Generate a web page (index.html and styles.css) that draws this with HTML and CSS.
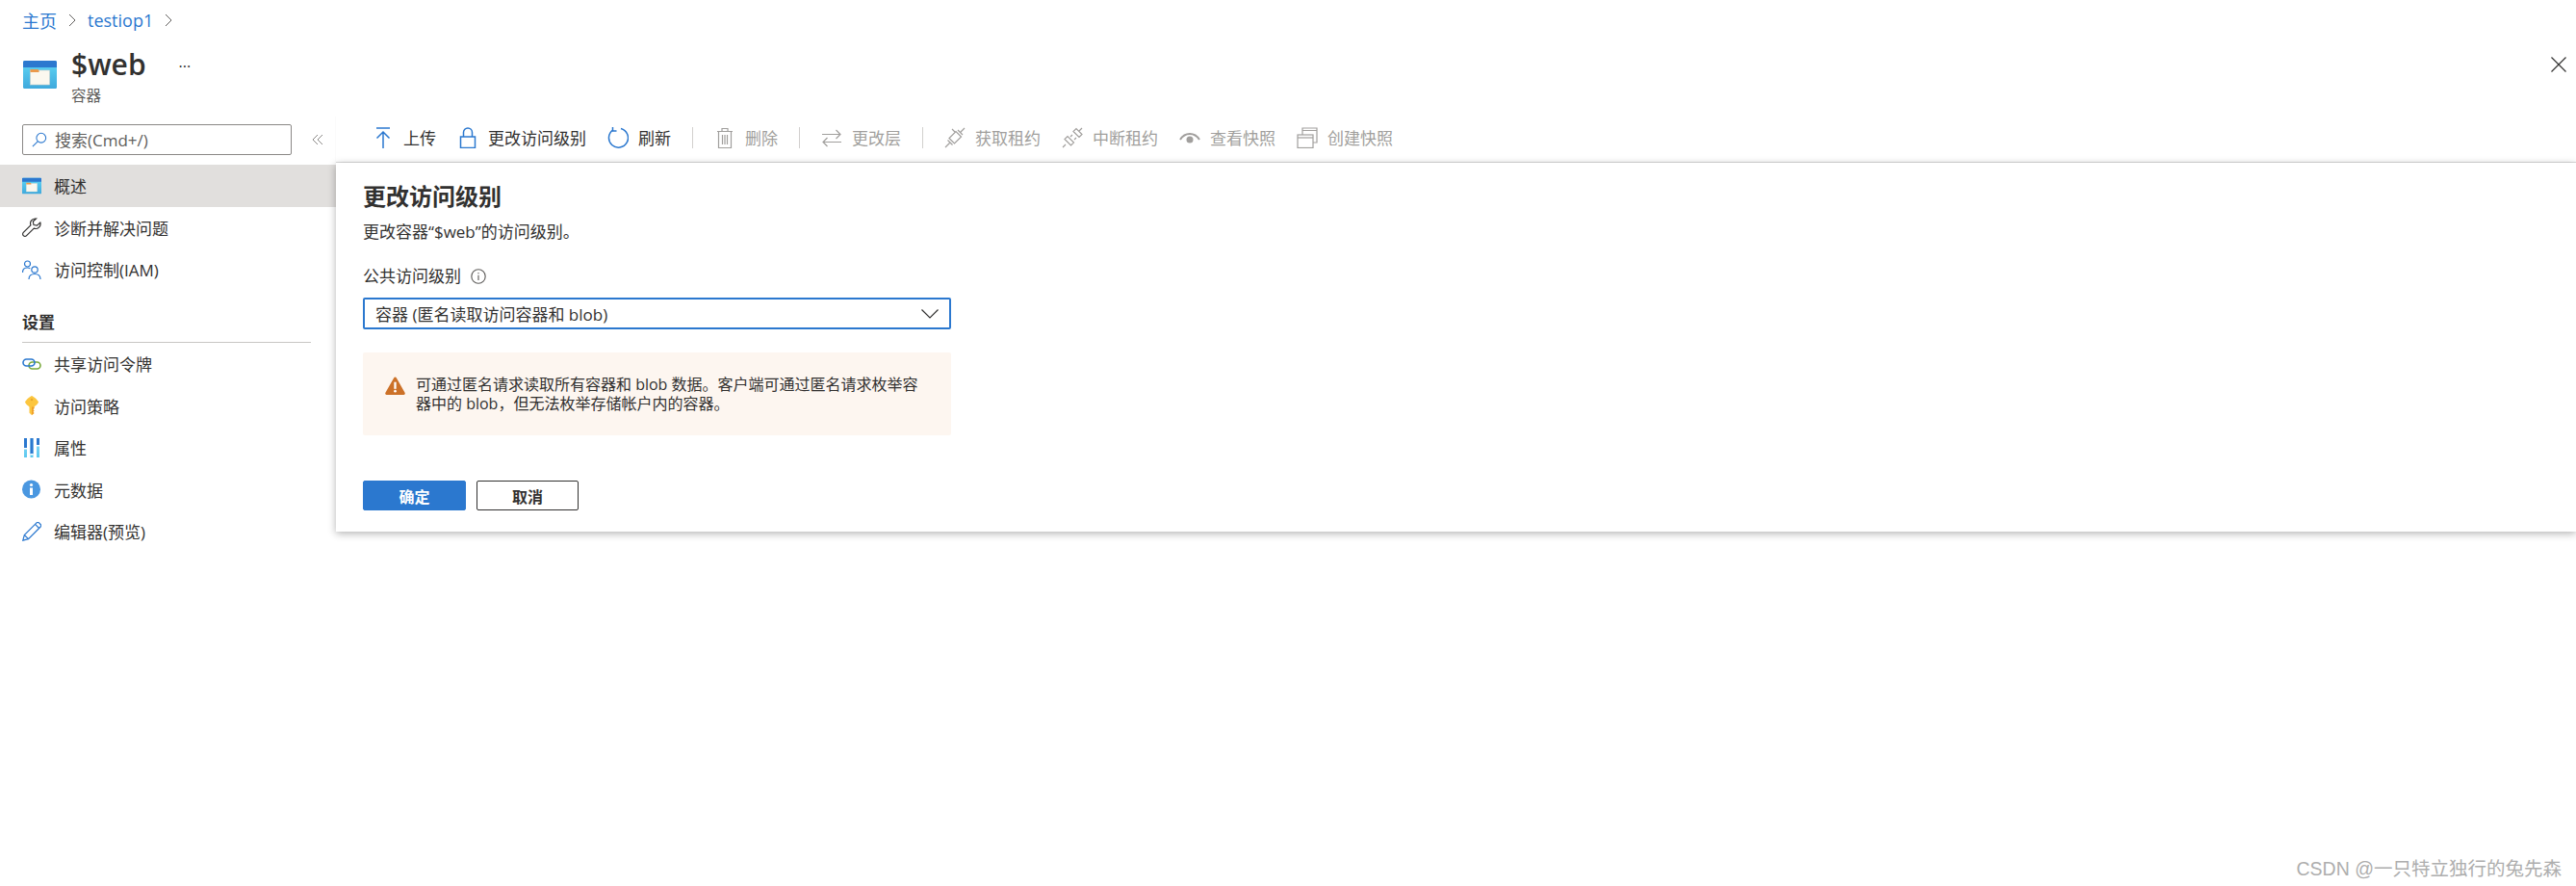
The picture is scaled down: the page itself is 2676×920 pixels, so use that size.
FILE: index.html
```html
<!DOCTYPE html>
<html lang="zh-CN">
<head>
  <meta charset="UTF-8" />
  <title>$web - 容器</title>
  <link rel="stylesheet" href="styles.css">
</head>
<body>
  <svg class="defs" width="0" height="0">
    <defs>
      <linearGradient id="box-grad" x1="0" y1="0" x2="0" y2="1">
        <stop offset="0" stop-color="#5fd6f5"/>
        <stop offset="1" stop-color="#3fa9dc"/>
      </linearGradient>
      <linearGradient id="bar-grad" x1="0" y1="0" x2="0" y2="1">
        <stop offset="0" stop-color="#8fdcf7"/>
        <stop offset="1" stop-color="#5bc8ef"/>
      </linearGradient>
      <symbol id="box" viewBox="0 0 35 29">
        <rect width="35" height="29" rx="1.5" fill="url(#box-grad)"/>
        <path d="M0 1.5A1.5 1.5 0 0 1 1.5 0h32A1.5 1.5 0 0 1 35 1.5V7H0z" fill="#2b78cf"/>
        <rect x="7.5" y="10" width="20" height="15" fill="#fbf8ef" stroke="#cfd3cc" stroke-width=".6"/>
        <path d="M7.5 9h8l1 1.5v1.5h-9z" fill="#eb9a4c"/>
      </symbol>
    </defs>
  </svg>

  <!--CAMINHO-->
  <nav class="crumbs">
    <a>主页</a>
    <svg class="crumb-sep" viewBox="0 0 8 14"><path d="M1 1l6 6-6 6"/></svg>
    <a>testiop1</a>
    <svg class="crumb-sep" viewBox="0 0 8 14"><path d="M1 1l6 6-6 6"/></svg>
  </nav>

  <header class="head">
    <svg class="head-icon"><use href="#box"/></svg>
    <div class="head-text">
      <h1>$web</h1>
      <div class="head-sub">容器</div>
    </div>
    <span class="head-more">···</span>
    <svg class="head-close" viewBox="0 0 16 16"><path d="M.5.5l15 15M15.5.5l-15 15"/></svg>
  </header>

  <div class="layout">
    <aside class="side">
      <div class="search-row">
        <div class="search">
          <svg class="ico-search" viewBox="0 0 18 18"><circle cx="11" cy="7" r="5.5"/><path d="M7 11L1 17"/></svg>
          <span>搜索(Cmd+/)</span>
        </div>
        <svg class="collapse" viewBox="0 0 12 12"><path d="M6 1L1 6l5 5M11 1L6 6l5 5"/></svg>
      </div>

      <a class="item active">
        <svg class="ico"><use href="#box"/></svg>概述
      </a>
      <a class="item">
        <svg class="ico" viewBox="0 0 20 20"><path d="M13.5 1a5 5 0 0 0-4.6 6.8L1.3 15.4a2.3 2.3 0 0 0 3.3 3.3l7.6-7.6A5 5 0 0 0 18.8 5l-3.3 3.2-3.5-.7-.7-3.5L14.5 1z" fill="none" stroke="#323130" stroke-width="1.2"/></svg>诊断并解决问题
      </a>
      <a class="item">
        <svg class="ico" viewBox="0 0 20 20" fill="none" stroke="#2b78cf" stroke-width="1.2"><circle cx="5.5" cy="4" r="3"/><path d="M.5 13c0-3 2-5 5-5 1 0 2 .2 2.7.8"/><circle cx="13" cy="10" r="3.2"/><path d="M7 20c0-3.5 2.500-5.500 6-5.500s6 2 6 5.500"/></svg>访问控制(IAM)
      </a>

      <div class="group">设置</div>

      <a class="item">
        <svg class="ico" viewBox="0 0 20 12" fill="none" stroke-width="1.6"><rect x="7" y="4" width="12" height="7" rx="3.500" stroke="#7aa93c"/><rect x="1" y="1" width="12" height="7" rx="3.500" stroke="#2b78cf"/></svg>共享访问令牌
      </a>
      <a class="item">
        <svg class="ico" viewBox="0 0 20 20"><path d="M10 0c1 0 6 4 7 6.500-.5 2-3.500 4-4.500 5V13l-1.200 1.200 1.200 1.300-1.200 1.300 1.200 1.200L10 20l-2.500-2.200V11.500c-1-1-4-3-4.500-5C4 4 9 0 10 0z" fill="#fcc63f"/><path d="M10 11.500h2.500V13l-1.200 1.200 1.200 1.300-1.200 1.300 1.200 1.200L10 20z" fill="#ef9f2b"/><circle cx="10" cy="4" r="1.300" fill="#e9a92d"/></svg>访问策略
      </a>
      <a class="item">
        <svg class="ico" viewBox="0 0 20 20"><rect x="2" width="3" height="20" fill="url(#bar-grad)"/><rect x="8.500" width="3" height="20" fill="url(#bar-grad)"/><rect x="15" width="3" height="20" fill="url(#bar-grad)"/><rect x="2" width="3" height="10" fill="#2b78cf"/><rect x="8.500" width="3" height="16" fill="#2b78cf"/><rect x="15" width="3" height="7" fill="#2b78cf"/><rect x="2" y="10" width="3" height="1.500" fill="#fff"/><rect x="8.500" y="16" width="3" height="1.500" fill="#fff"/><rect x="15" y="7" width="3" height="1.500" fill="#fff"/></svg>属性
      </a>
      <a class="item">
        <svg class="ico" viewBox="0 0 20 20"><circle cx="9.500" cy="10" r="9.500" fill="#4a97e0"/><circle cx="9.500" cy="5.500" r="1.600" fill="#fff"/><rect x="8" y="8.500" width="3" height="7.500" fill="#fff"/></svg>元数据
      </a>
      <a class="item">
        <svg class="ico" viewBox="0 0 20 20" fill="none" stroke="#2b78cf" stroke-width="1.2"><path d="M.8 19.200l1.500-5.700L15 .9a1.800 1.800 0 0 1 2.500 0l1.600 1.600a1.800 1.800 0 0 1 0 2.500L6.500 17.700zM2.300 13.500l4.200 4.200M13.500 2.400l4.100 4.100"/></svg>编辑器(预览)
      </a>
    </aside>

    <main class="main">
      <div class="toolbar">
        <button class="tool">
          <svg viewBox="0 0 22 22" class="blue"><path d="M4 1h14M11 22V6M4.500 11.500L11 5l6.500 6.500"/></svg>上传
        </button>
        <button class="tool">
          <svg viewBox="0 0 22 22" class="blue"><rect x="3.500" y="10" width="15" height="11.500"/><path d="M6.500 10V5.500a4.500 4.500 0 0 1 9 0V10"/></svg>更改访问级别
        </button>
        <button class="tool">
          <svg viewBox="0 0 22 22" class="blue"><path d="M6 2.800A10 10 0 1 0 14 1.500"/><path d="M5.500 0v4h4" /></svg>刷新
        </button>
        <span class="tool-sep"></span>
        <button class="tool off">
          <svg viewBox="0 0 22 22"><path d="M3 4.500h16M8 4.500V1.500h6v3M4.500 4.500V21.500h13V4.500M8.500 8v10M11 8v10M13.500 8v10"/></svg>删除
        </button>
        <span class="tool-sep"></span>
        <button class="tool off">
          <svg viewBox="0 0 22 22"><path d="M1 7.500h19M15.500 3l4.500 4.500-4.500 4.500M21 15.500H2M6.500 11L2 15.500 6.500 20"/></svg>更改层
        </button>
        <span class="tool-sep"></span>
        <button class="tool off">
          <svg viewBox="0 0 22 22"><path d="M1 21l4.500-4.500M17 5l4-4M14 3l5 5M5 11.500l5.500 5.500 7-7-5.500-5.500zM3.500 13.500l5 5M11 5L8 2"/></svg>获取租约
        </button>
        <button class="tool off">
          <svg viewBox="0 0 22 22"><path d="M1 21l3-3M3 12.500l6.500 6.500 3-3-6.500-6.500zM9 10l2-2M13 13l2-2M12 4.500l6 6 3-3-6-6zM18 4l3-3"/></svg>中断租约
        </button>
        <button class="tool off">
          <svg viewBox="0 0 22 22"><path d="M1 13c2.500-4 5.800-6 10-6s7.500 2 10 6" stroke-width="2"/><circle cx="11" cy="13" r="3.500" fill="#a19f9d" stroke="none"/></svg>查看快照
        </button>
        <button class="tool off">
          <svg viewBox="0 0 22 22"><path d="M6 8V1h15v15h-4M6 3.500h15"/><rect x="1" y="8" width="16" height="13.500"/><path d="M1 11h16"/></svg>创建快照
        </button>
      </div>

      <section class="panel">
        <h2>更改访问级别</h2>
        <p class="desc">更改容器“$web”的访问级别。</p>
        <div class="label">
          公共访问级别
          <svg class="info" viewBox="0 0 14 14"><circle cx="7" cy="7" r="6.300"/><path d="M7 6v4.500M7 3.500v1.200"/></svg>
        </div>
        <div class="select">
          <span>容器 (匿名读取访问容器和 blob)</span>
          <svg viewBox="0 0 18 10"><path d="M.5.5L9 9 17.500.5"/></svg>
        </div>
        <div class="alert">
          <svg viewBox="0 0 22 20"><path d="M11 .5a1.500 1.500 0 0 1 1.300.8l9.300 16.400a1.500 1.500 0 0 1-1.300 2.300H1.700a1.500 1.500 0 0 1-1.300-2.300L9.700 1.300A1.500 1.500 0 0 1 11 .5z" fill="#cc7128"/><rect x="9.800" y="6" width="2.400" height="7.500" fill="#fff"/><circle cx="11" cy="16" r="1.400" fill="#fff"/></svg>
          <p>可通过匿名请求读取所有容器和 blob 数据。客户端可通过匿名请求枚举容器中的 blob，但无法枚举存储帐户内的容器。</p>
        </div>
        <div class="actions">
          <button class="btn primary">确定</button>
          <button class="btn">取消</button>
        </div>
      </section>
    </main>
  </div>

  <div class="watermark">CSDN @一只特立独行的兔先森</div>
</body>
</html>
```

FILE: styles.css
```css
:root {
  --azul: #2b78cf;
  --texto: #323130;
  --apagado: #a19f9d;
  --fonte: "Open Sans", "Noto Sans CJK SC", sans-serif;
}

* {
  margin: 0;
  padding: 0;
  box-sizing: border-box;
}

body {
  position: relative;
  width: 2676px;
  height: 920px;
  overflow: hidden;
  background-color: #fff;
  color: var(--texto);
  font-family: var(--fonte);
  font-size: 17px;
}

.defs {
  position: absolute;
}

/* caminho */
.crumbs {
  display: flex;
  align-items: center;
  gap: 12px;
  height: 42px;
  padding-left: 23px;
  color: var(--azul);
  font-size: 18px;
}

.crumb-sep {
  width: 8px;
  height: 14px;
  fill: none;
  stroke: #605e5c;
  stroke-width: 1;
}

/* cabecalho */
.head {
  display: flex;
  height: 78px;
  padding: 21px 10px 0 24px;
}

.head-icon {
  flex: none;
  width: 35px;
  height: 29px;
}

.head-text {
  margin-left: 15px;
  margin-top: -18px;
}

h1 {
  font-size: 30px;
  font-weight: 600;
  line-height: 44px;
}

.head-sub {
  margin-top: -2px;
  font-size: 15.500px;
  line-height: 24px;
  color: #605e5c;
}

.head-more {
  margin-left: 34px;
  margin-top: -6px;
  font-size: 16px;
  line-height: 24px;
}

.head-close {
  width: 16px;
  height: 16px;
  margin-left: auto;
  margin-top: -4px;
  fill: none;
  stroke: #323130;
  stroke-width: 1.200;
}

.layout {
  display: grid;
  grid-template-columns: 349px 1fr;
}

/* menu lateral */
.search-row {
  display: flex;
  align-items: center;
  height: 51px;
  padding: 0 0 2px 23px;
}

.search {
  display: flex;
  align-items: center;
  gap: 8px;
  width: 280px;
  height: 32px;
  padding-left: 9px;
  border: 1px solid #8a8886;
  border-radius: 2px;
  color: #605e5c;
}

.ico-search {
  width: 16px;
  height: 16px;
  fill: none;
  stroke: var(--azul);
  stroke-width: 1.200;
}

.collapse {
  width: 12px;
  height: 12px;
  margin-left: 21px;
  fill: none;
  stroke: #8a8886;
  stroke-width: 1;
}

.item {
  display: flex;
  align-items: center;
  gap: 13px;
  height: 43.600px;
  padding-left: 23px;
  white-space: nowrap;
}

.item.active {
  background-color: #e1dfdd;
}

.ico {
  flex: none;
  width: 20px;
  height: 20px;
}

.group {
  display: flex;
  align-items: center;
  height: 54px;
  margin: 0 26px 0 23px;
  padding-top: 11px;
  border-bottom: 1px solid #c8c6c4;
  font-weight: 600;
}

/* barra de ferramentas */
.toolbar {
  display: flex;
  align-items: center;
  gap: 22px;
  height: 49px;
  padding: 0 0 3px 38px;
  border-bottom: 1px solid #dcdcdc;
  box-shadow: 0 1px 1px #e6e6e6;
}

.tool {
  display: flex;
  align-items: center;
  gap: 10px;
  background: none;
  border: none;
  color: var(--texto);
  font: inherit;
}

.tool svg {
  flex: none;
  width: 22px;
  height: 22px;
  fill: none;
  stroke: var(--apagado);
  stroke-width: 1.200;
}

.tool svg.blue {
  stroke: var(--azul);
  stroke-width: 1.500;
}

.tool.off {
  color: var(--apagado);
}

.tool-sep {
  width: 1px;
  height: 22px;
  background-color: #d2d0ce;
}

/* painel */
.panel {
  height: 383px;
  margin-right: 0;
  padding: 22px 0 0 28px;
  background-color: #fff;
  box-shadow: 0 2px 8px rgba(0, 0, 0, 0.3);
}

h2 {
  font-size: 24px;
  font-weight: 600;
  line-height: 26px;
}

.desc {
  margin-top: 11px;
  line-height: 26px;
}

.label {
  display: flex;
  align-items: center;
  gap: 10px;
  margin-top: 20px;
  line-height: 26px;
}

.info {
  width: 16px;
  height: 16px;
  fill: none;
  stroke: #605e5c;
  stroke-width: 1;
}

.select {
  display: flex;
  align-items: center;
  justify-content: space-between;
  width: 611px;
  height: 33px;
  margin-top: 9px;
  padding: 0 11px;
  border: 2px solid var(--azul);
  border-radius: 2px;
}

.select svg {
  width: 18px;
  height: 10px;
  fill: none;
  stroke: #323130;
  stroke-width: 1.200;
}

.alert {
  display: flex;
  gap: 11px;
  width: 611px;
  height: 86px;
  margin-top: 24px;
  padding: 23px 26px 0 23px;
  background-color: #fdf6f0;
  border-radius: 2px;
  font-size: 16px;
  line-height: 20px;
}

.alert svg {
  flex: none;
  width: 21px;
  height: 19px;
  margin-top: 2px;
}

.actions {
  display: flex;
  gap: 11px;
  margin-top: 47px;
}

.btn {
  width: 106px;
  height: 31px;
  background-color: #fff;
  border: 1px solid #323130;
  border-radius: 2px;
  color: var(--texto);
  font-family: var(--fonte);
  font-size: 16px;
  font-weight: 600;
}

.btn.primary {
  width: 107px;
  background-color: var(--azul);
  border-color: var(--azul);
  color: #fff;
}

/* marca de agua */
.watermark {
  position: absolute;
  right: 15px;
  bottom: 5px;
  color: #aeaeae;
  font-family: "Liberation Sans", "Noto Sans CJK SC", sans-serif;
  font-size: 19.500px;
}
```
